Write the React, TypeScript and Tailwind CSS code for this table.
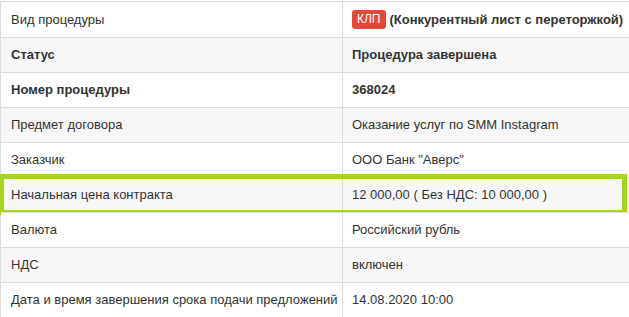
const ROWS: { label: string; value: React.ReactNode; bold?: boolean; highlight?: boolean }[] = [
  {
    label: "Вид процедуры",
    value: (
      <span className="flex items-center gap-1">
        <span className="rounded-[3px] bg-[#e0493a] px-[5px] py-[2px] text-[12px] leading-[15px] text-white">КЛП</span>
        <span className="font-bold">(Конкурентный лист с переторжкой)</span>
      </span>
    ),
  },
  { label: "Статус", value: "Процедура завершена", bold: true },
  { label: "Номер процедуры", value: "368024", bold: true },
  { label: "Предмет договора", value: "Оказание услуг по SMM Instagram" },
  { label: "Заказчик", value: 'ООО Банк "Аверс"' },
  { label: "Начальная цена контракта", value: "12 000,00 ( Без НДС: 10 000,00 )", highlight: true },
  { label: "Валюта", value: "Российский рубль" },
  { label: "НДС", value: "включен" },
  { label: "Дата и время завершения срока подачи предложений", value: "14.08.2020 10:00" },
];

export default function App() {
  return (
    <div className="h-[317px] w-[629px] overflow-hidden bg-white pt-px font-['Liberation_Sans',Arial,sans-serif] text-[13px] text-[#333]">
      <div className="w-[640px] border-l border-[#ddd]">
        {ROWS.map((row, i) => (
          <div
            key={row.label}
            className={`relative flex border-t border-[#ddd] ${i === 0 ? "h-[36px]" : "h-[35px]"} ${
              i % 2 === 1 ? "bg-[#f7f7f7]" : "bg-white"
            } ${row.bold ? "font-bold" : ""}`}
          >
            <div className="flex w-[342px] shrink-0 items-center border-r border-[#ddd] pl-[10px]">{row.label}</div>
            <div className="flex flex-1 items-center pl-[9px]">{row.value}</div>
            {row.highlight && (
              <div className="pointer-events-none absolute top-[-4px] bottom-[-3px] left-[-2px] w-[628px] border-[5px] border-[#a6d420]" />
            )}
          </div>
        ))}
      </div>
    </div>
  );
}
